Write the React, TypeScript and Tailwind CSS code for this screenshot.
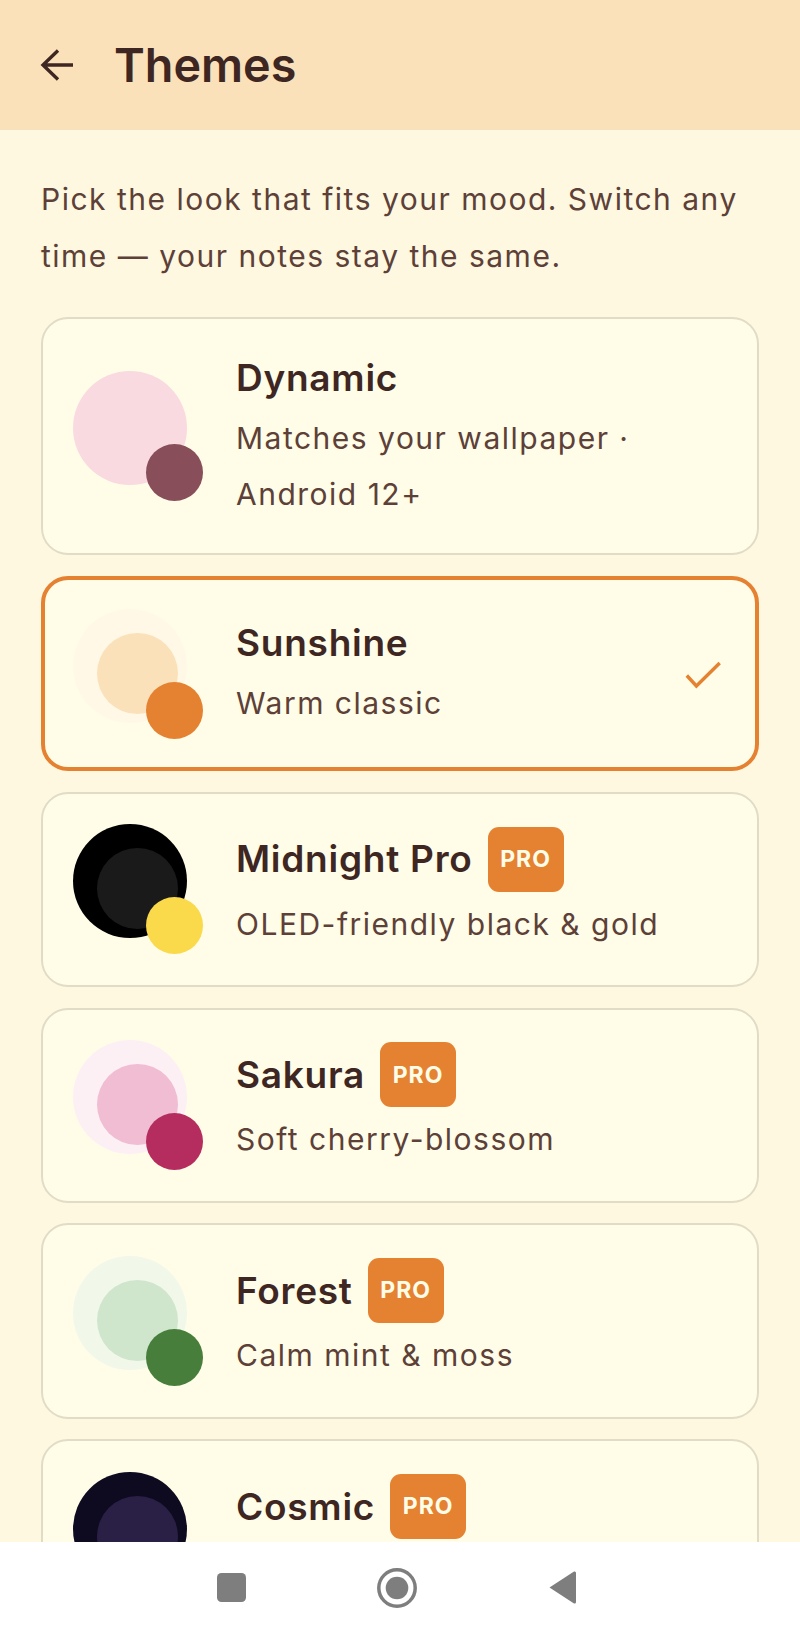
import React from "react";

type T = { name: string; desc: string[]; outer: string; inner: string; dot: string; pro?: boolean; selected?: boolean };

const themes: T[] = [
  { name: "Dynamic", desc: ["Matches your wallpaper ·", "Android 12+"], outer: "bg-[#f9dae0]", inner: "bg-[#f9dae0]", dot: "bg-[#884e5a]" },
  { name: "Sunshine", desc: ["Warm classic"], outer: "bg-[#fff8e6]", inner: "bg-[#fbe1b9]", dot: "bg-[#e58231]", selected: true },
  { name: "Midnight Pro", desc: ["OLED-friendly black & gold"], outer: "bg-black", inner: "bg-[#1a1a1a]", dot: "bg-[#fad94a]", pro: true },
  { name: "Sakura", desc: ["Soft cherry-blossom"], outer: "bg-[#fdf0f5]", inner: "bg-[#f0bdd2]", dot: "bg-[#b52d5e]", pro: true },
  { name: "Forest", desc: ["Calm mint & moss"], outer: "bg-[#f1f8e9]", inner: "bg-[#cfe6cd]", dot: "bg-[#477e3b]", pro: true },
  { name: "Cosmic", desc: [""], outer: "bg-[#0e0a20]", inner: "bg-[#2a1f45]", dot: "bg-[#b388ff]", pro: true },
];

function Card({ t }: { t: T }) {
  return (
    <div
      className={`flex shrink-0 items-center rounded-[27px] bg-[#fffde8] ${
        t.selected
          ? "border-[4.4px] border-[#e58231] pl-[28px] pr-[32px] py-[28.75px]"
          : "border-[2px] border-[#e0dcc6] pl-[30px] pr-[30px] py-[30.65px]"
      }`}
    >
      <div className="relative h-[130px] w-[130px] shrink-0">
        <div className={`absolute left-0 top-0 h-[114px] w-[114px] rounded-full ${t.outer}`}>
          <div className={`absolute left-[24px] top-[24px] h-[81px] w-[81px] rounded-full ${t.inner}`} />
        </div>
        <div className={`absolute left-[73px] top-[73px] h-[57px] w-[57px] rounded-full ${t.dot}`} />
      </div>
      <div className="ml-[33px] flex min-w-0 flex-1 flex-col">
        <div className="flex items-center gap-[15px]">
          <span className="text-[37px] font-semibold leading-[56px] tracking-[0.74px] text-[#3e2723]">{t.name}</span>
          {t.pro && (
            <span className="flex h-[65px] w-[76px] items-center justify-center rounded-[11px] bg-[#e58231] text-[23px] font-bold tracking-[1px] text-[#fffde8]">
              PRO
            </span>
          )}
        </div>
        <div className="mt-[4px] text-[30px] leading-[56.5px] tracking-[1.5px] text-[#5d4037]">
          {t.desc.map((d) => (
            <div key={d} className="h-[56.5px]">
              {d}
            </div>
          ))}
        </div>
      </div>
      {t.selected && (
        <svg width="40" height="40" viewBox="0 0 40 40" className="shrink-0" fill="none">
          <path d="M3.8 21.5 L13.4 32 L36.7 9" stroke="#e58231" strokeWidth="3.4" />
        </svg>
      )}
    </div>
  );
}

export default function App() {
  return (
    <div
      className="relative flex h-[1638px] w-[800px] flex-col overflow-hidden bg-[#fff8e1]"
      style={{ fontFamily: "Inter, 'Noto Sans', sans-serif" }}
    >
      <header className="flex h-[130px] shrink-0 items-center bg-[#fbe1b9] pl-[38px]">
        <svg width="40" height="40" viewBox="0 0 40 40" fill="none" stroke="#3e2723" strokeWidth="3.4">
          <path d="M35 20 H5 M20 5.5 L5 20 L20 34.5" />
        </svg>
        <h1 className="ml-[36px] text-[46.7px] font-semibold leading-none text-[#3e2723]">Themes</h1>
      </header>
      <main className="flex min-h-0 flex-1 flex-col overflow-hidden px-[41px] pt-[41px]">
        <p className="text-[30px] leading-[57px] tracking-[1.5px] text-[#5d4037]">
          Pick the look that fits your mood. Switch any time — your notes stay the same.
        </p>
        <div className="mt-[32px] flex flex-col gap-[20.5px]">
          {themes.map((t) => (
            <Card key={t.name} t={t} />
          ))}
        </div>
      </main>
      <nav className="flex h-[96px] shrink-0 items-center bg-white pb-[5px] pl-[217px]">
        <svg width="29" height="29" viewBox="0 0 29 29" fill="#7e7e7e">
          <rect width="29" height="29" rx="4.5" />
        </svg>
        <svg width="40" height="40" viewBox="0 0 40 40" className="ml-[131px]" fill="#7e7e7e">
          <circle cx="20" cy="20" r="18.2" fill="none" stroke="#7e7e7e" strokeWidth="3.5" />
          <circle cx="20" cy="20" r="11.3" />
        </svg>
        <svg width="27" height="33" viewBox="0 0 27 33" className="ml-[132px]" fill="#7e7e7e">
          <path d="M0.5 16.5 L25 0.6 Q27 0 27 2 V31 Q27 33 25 32.4 Z" />
        </svg>
      </nav>
    </div>
  );
}
